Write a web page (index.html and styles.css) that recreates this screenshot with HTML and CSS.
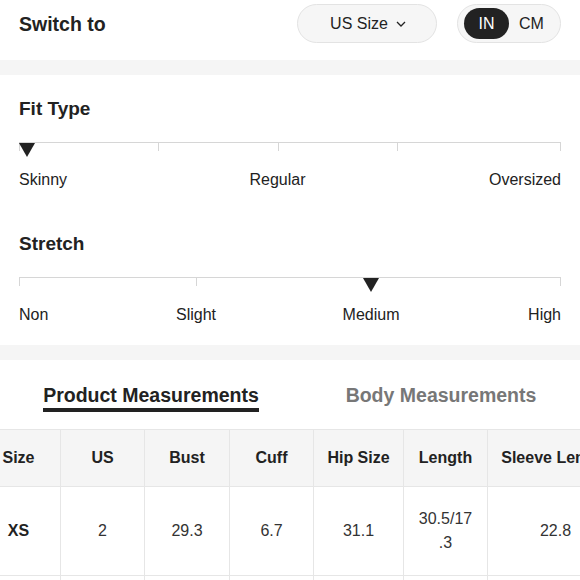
FILE: index.html
```html
<!DOCTYPE html>
<html>
<head>
<meta charset="utf-8">
<link rel="stylesheet" href="styles.css">
</head>
<body>
<header class="switch-bar">
  <h2 class="switch-title">Switch to</h2>
  <div class="switch-controls">
    <button class="pill size-pill">US Size
      <svg class="chev" width="10" height="6" viewBox="0 0 10 6"><polyline points="1,1 5,5 9,1" fill="none" stroke="#222" stroke-width="1.3"/></svg>
    </button>
    <div class="pill unit-pill">
      <span class="unit unit-active">IN</span>
      <span class="unit">CM</span>
    </div>
  </div>
</header>
<div class="band"></div>
<section class="fit">
  <div class="scale-group">
    <h3 class="scale-title">Fit Type</h3>
    <div class="track track-fit">
      <span class="seg"></span><span class="seg"></span><span class="seg"></span><span class="seg seg-last"></span>
      <span class="marker marker-fit"></span>
    </div>
    <div class="labels labels-fit">
      <span class="lab-left">Skinny</span>
      <span class="lab-center">Regular</span>
      <span class="lab-right">Oversized</span>
    </div>
  </div>
  <div class="scale-group">
    <h3 class="scale-title">Stretch</h3>
    <div class="track track-stretch">
      <span class="seg"></span><span class="seg"></span><span class="seg seg-last"></span>
      <span class="marker marker-stretch"></span>
    </div>
    <div class="labels labels-stretch">
      <span class="lab-left">Non</span>
      <span class="lab-center">Slight</span>
      <span class="lab-center">Medium</span>
      <span class="lab-right">High</span>
    </div>
  </div>
</section>
<div class="band"></div>
<section class="measure">
  <div class="tabs">
    <div class="tab"><span class="tab-label tab-active">Product Measurements</span></div>
    <div class="tab"><span class="tab-label">Body Measurements</span></div>
  </div>
  <div class="table-wrap">
    <table class="size-table">
      <colgroup>
        <col class="c84"><col class="c84"><col class="c85"><col class="c84"><col class="c90"><col class="c84"><col class="c136">
      </colgroup>
      <thead>
        <tr><th>Size</th><th>US</th><th>Bust</th><th>Cuff</th><th>Hip Size</th><th>Length</th><th>Sleeve Length</th></tr>
      </thead>
      <tbody>
        <tr><td class="strong">XS</td><td>2</td><td>29.3</td><td>6.7</td><td>31.1</td><td><span class="wrap">30.5/17<wbr>.3</span></td><td>22.8</td></tr>
        <tr class="next-row"><td></td><td></td><td></td><td></td><td></td><td></td><td></td></tr>
      </tbody>
    </table>
  </div>
</section>
</body>
</html>
```
FILE: styles.css
```css
* { box-sizing: border-box; }
html, body { margin: 0; padding: 0; background: #fff; }
body {
  font-family: "Liberation Sans", Arial, Helvetica, sans-serif;
  color: #222;
  width: 580px;
  height: 580px;
  overflow: hidden;
}
.switch-bar {
  display: flex;
  align-items: center;
  justify-content: space-between;
  padding: 4px 19px 17px 19px;
}
.switch-title {
  margin: 0;
  font-size: 19.5px;
  font-weight: bold;
  line-height: 22px;
  color: #222;
}
.switch-controls { display: flex; gap: 20px; }
.pill {
  height: 39px;
  border: 1px solid #e3e3e3;
  background: #f6f6f6;
  border-radius: 20px;
  font-family: inherit;
  font-size: 16px;
  color: #222;
}
.size-pill {
  width: 140px;
  display: flex;
  align-items: center;
  justify-content: center;
  gap: 8px;
  padding: 0 0 0 2px;
}
.chev { display: block; margin-top: 1px; }
.unit-pill {
  width: 104px;
  display: flex;
  align-items: center;
  padding: 0 6px;
}
.unit {
  width: 45px;
  height: 31px;
  display: flex;
  align-items: center;
  justify-content: center;
  border-radius: 16px;
}
.unit-active { background: #222; color: #fff; }
.band { height: 15px; background: #f5f5f5; }
.fit { padding: 23px 19px 20px 19px; display: flex; flex-direction: column; gap: 43px; }
.scale-title {
  margin: 0 0 22px 0;
  font-size: 19px;
  line-height: 22px;
  font-weight: bold;
  color: #222;
}
.track {
  position: relative;
  display: grid;
  height: 28px;
  align-items: start;
}
.track-fit { grid-template-columns: 139px 120px 119px 1fr; }
.track-stretch { grid-template-columns: 177px 175px 1fr; }
.seg {
  height: 9px;
  border-top: 1px solid #d6d6d6;
  border-left: 1px solid #d6d6d6;
}
.seg-last { border-right: 1px solid #d6d6d6; }
.marker {
  position: absolute;
  top: 1px;
  width: 0;
  height: 0;
  border-left: 8.5px solid transparent;
  border-right: 8.5px solid transparent;
  border-top: 14px solid #222;
}
.marker-fit { left: 0; }
.marker-stretch { left: 343.5px; }
.labels {
  display: grid;
  font-size: 16px;
  line-height: 20px;
  color: #222;
}
.labels-fit { grid-template-columns: 139px 239px 1fr; }
.labels-stretch { grid-template-columns: 88.5px 177px 173px 1fr; }
.lab-left { text-align: left; }
.lab-center { text-align: center; }
.lab-right { text-align: right; }
.measure { padding-top: 24px; }
.tabs { display: flex; margin-left: 6px; width: 580px; }
.tab { width: 290px; display: flex; justify-content: center; }
.tab-label {
  font-size: 19.5px;
  line-height: 23px;
  font-weight: bold;
  color: #777;
  padding-bottom: 1px;
  border-bottom: 4px solid transparent;
}
.tab-active { color: #222; border-bottom-color: #222; }
.table-wrap { margin-top: 17px; overflow: hidden; width: 580px; }
.size-table {
  margin-left: -24px;
  width: 647px;
  table-layout: fixed;
  border-collapse: collapse;
  font-size: 16px;
}
.c84 { width: 84px; }
.c85 { width: 85px; }
.c90 { width: 90px; }
.c136 { width: 136px; }
.size-table th, .size-table td {
  border: 1px solid #e6e6e6;
  text-align: center;
  vertical-align: middle;
  padding: 0 10px;
  line-height: 24px;
}
.size-table th {
  height: 57px;
  background: #f5f5f5;
  font-weight: bold;
  color: #222;
  white-space: nowrap;
  overflow: hidden;
}
.size-table td { height: 89px; color: #333; }
.size-table td.strong { font-weight: bold; color: #222; }
.wrap { display: inline-block; max-width: 62px; }
```
